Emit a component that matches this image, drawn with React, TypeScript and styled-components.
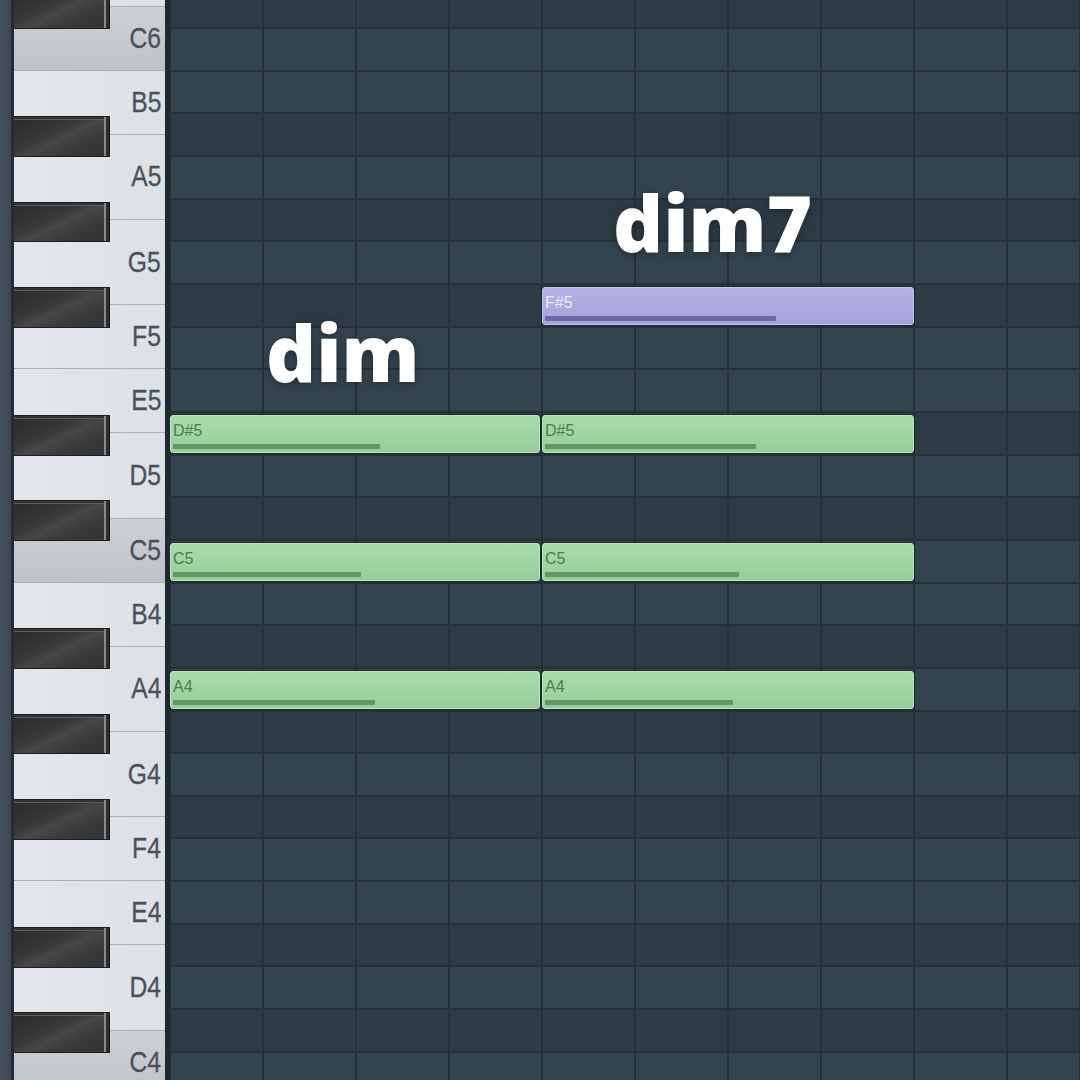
import React from 'react';
import styled, { createGlobalStyle } from 'styled-components';

const H = 512 / 12;
const TOP = 28;

const Global = createGlobalStyle`
  html, body { margin: 0; padding: 0; background: #2f3d47; overflow: hidden; }
  #root { width: 1080px; height: 1080px; }
`;

const Roll = styled.div`
  position: relative;
  display: flex;
  width: 1080px;
  height: 1080px;
  overflow: hidden;
  font-family: "Liberation Sans", Arial, sans-serif;
`;

const Rail = styled.div`
  flex: none;
  width: 11px;
  background: linear-gradient(90deg, #46535e, #3b4752);
  border-right: 3px solid #232d35;
`;

const Keyboard = styled.div`
  position: relative;
  flex: none;
  width: 151px;
  display: flex;
  flex-direction: column;
  overflow: hidden;
`;

const WhiteKey = styled.div<{ $h: number; $c: boolean }>`
  flex: none;
  height: ${p => p.$h}px;
  box-sizing: border-box;
  border-bottom: 1px solid #aab0b6;
  background: ${p =>
    p.$c
      ? 'linear-gradient(180deg, #cdd1d5 0%, #bfc3c8 100%)'
      : 'linear-gradient(90deg, #e3e7eb 0%, #dce1e5 100%)'};
  display: flex;
  align-items: center;
  justify-content: flex-end;
  padding-right: 4px;
`;

const KeyLabel = styled.span`
  display: inline-block;
  font-size: 29px;
  line-height: 1;
  color: #4a5158;
  transform: scaleX(0.85);
  transform-origin: right center;
  -webkit-text-stroke: 0.3px #4a5158;
`;

const BlackKey = styled.div<{ $top: number }>`
  position: absolute;
  left: 0;
  top: ${p => p.$top}px;
  width: 96px;
  height: ${H - 2}px;
  box-sizing: border-box;
  border: 1px solid #1c1c1c;
  border-left: none;
  background: linear-gradient(155deg, #2a2a2a 0%, #383838 40%, #474747 52%, #3a3a3a 70%, #323232 100%);
  box-shadow: inset -3px 0 0 #2e2e2e, inset -5px 0 0 #8a8a8a, inset 0 2px 0 #333, inset 0 3px 0 #5c5c5c;
`;

const Divider = styled.div`
  flex: none;
  width: 5px;
  background: #1e2930;
`;

const Grid = styled.div`
  position: relative;
  flex: 1;
  display: flex;
  flex-direction: column;
  overflow: hidden;
`;

const Row = styled.div<{ $h: number; $dark: boolean }>`
  flex: none;
  height: ${p => p.$h}px;
  box-sizing: border-box;
  border-bottom: 2px solid #25313a;
  background-color: ${p => (p.$dark ? '#2d3b45' : '#34444f')};
  background-image: repeating-linear-gradient(90deg, #25313a 0 2px, transparent 2px 93px);
  background-position: -1px 0;
`;

const Note = styled.div<{ $idx: number; $x: number; $w: number; $purple?: boolean }>`
  position: absolute;
  top: ${p => TOP + p.$idx * H + 3}px;
  left: ${p => p.$x}px;
  width: ${p => p.$w}px;
  height: 38px;
  box-sizing: border-box;
  border-radius: 3px;
  border: 1px solid ${p => (p.$purple ? '#c9c7f0' : '#bde6bd')};
  background: ${p =>
    p.$purple
      ? 'linear-gradient(180deg, #b2b0e4 0%, #a4a2da 100%)'
      : 'linear-gradient(180deg, #aadcab 0%, #98cd9a 100%)'};
  box-shadow: 0 0 0 1px rgba(18, 28, 24, 0.55);
  display: flex;
  flex-direction: column;
  padding: 7px 2px 3px 2px;
`;

const NoteLabel = styled.span<{ $purple?: boolean }>`
  font-size: 16px;
  line-height: 1;
  color: ${p => (p.$purple ? '#ececfc' : '#467f4d')};
`;

const Velocity = styled.div<{ $w: number; $purple?: boolean }>`
  margin-top: auto;
  height: 5px;
  width: ${p => p.$w}px;
  background: ${p => (p.$purple ? '#6c68a6' : '#5e9963')};
  border-radius: 1px;
`;

const Caption = styled.div<{ $x: number; $y: number }>`
  position: absolute;
  left: ${p => p.$x}px;
  top: ${p => p.$y}px;
  font-family: "Open Sans", "Noto Sans", sans-serif;
  font-weight: 800;
  font-size: 78px;
  line-height: 1;
  color: #ffffff;
  text-shadow: 0 2px 8px rgba(0, 0, 0, 0.35);
  white-space: nowrap;
`;

const whiteKeys: { name: string; h: number }[] = [
  { name: '', h: TOP - H / 2 },
  { name: 'C6', h: 1.5 * H },
  { name: 'B5', h: 1.5 * H },
  { name: 'A5', h: 2 * H },
  { name: 'G5', h: 2 * H },
  { name: 'F5', h: 1.5 * H },
  { name: 'E5', h: 1.5 * H },
  { name: 'D5', h: 2 * H },
  { name: 'C5', h: 1.5 * H },
  { name: 'B4', h: 1.5 * H },
  { name: 'A4', h: 2 * H },
  { name: 'G4', h: 2 * H },
  { name: 'F4', h: 1.5 * H },
  { name: 'E4', h: 1.5 * H },
  { name: 'D4', h: 2 * H },
  { name: 'C4', h: 1.5 * H },
];

const rows = ['C6', 'B5', 'A#5', 'A5', 'G#5', 'G5', 'F#5', 'F5', 'E5', 'D#5', 'D5', 'C#5', 'C5', 'B4', 'A#4', 'A4', 'G#4', 'G4', 'F#4', 'F4', 'E4', 'D#4', 'D4', 'C#4', 'C4'];

const blackIdx = [-1, 2, 4, 6, 9, 11, 14, 16, 18, 21, 23];

const notes = [
  { name: 'D#5', idx: 9, x: 0, w: 370, v: 207 },
  { name: 'C5', idx: 12, x: 0, w: 370, v: 188 },
  { name: 'A4', idx: 15, x: 0, w: 370, v: 202 },
  { name: 'F#5', idx: 6, x: 372, w: 372, v: 231, purple: true },
  { name: 'D#5', idx: 9, x: 372, w: 372, v: 211 },
  { name: 'C5', idx: 12, x: 372, w: 372, v: 194 },
  { name: 'A4', idx: 15, x: 372, w: 372, v: 188 },
];

export default function App() {
  return (
    <>
      <Global />
      <Roll>
        <Rail />
        <Keyboard>
          {whiteKeys.map((k, i) => (
            <WhiteKey key={i} $h={k.h} $c={k.name.startsWith('C')}>
              {k.name && <KeyLabel>{k.name}</KeyLabel>}
            </WhiteKey>
          ))}
          {blackIdx.map(i => (
            <BlackKey key={i} $top={TOP + i * H + 3} />
          ))}
        </Keyboard>
        <Divider />
        <Grid>
          <Row $h={TOP + 1} $dark />
          {rows.map((r, i) => (
            <Row key={i} $h={H} $dark={r.includes('#')} />
          ))}
          {notes.map((n, i) => (
            <Note key={i} $idx={n.idx} $x={n.x} $w={n.w} $purple={n.purple}>
              <NoteLabel $purple={n.purple}>{n.name}</NoteLabel>
              <Velocity $w={n.v} $purple={n.purple} />
            </Note>
          ))}
        </Grid>
        <Caption $x={266} $y={313}>dim</Caption>
        <Caption $x={613} $y={183}>dim7</Caption>
      </Roll>
    </>
  );
}
